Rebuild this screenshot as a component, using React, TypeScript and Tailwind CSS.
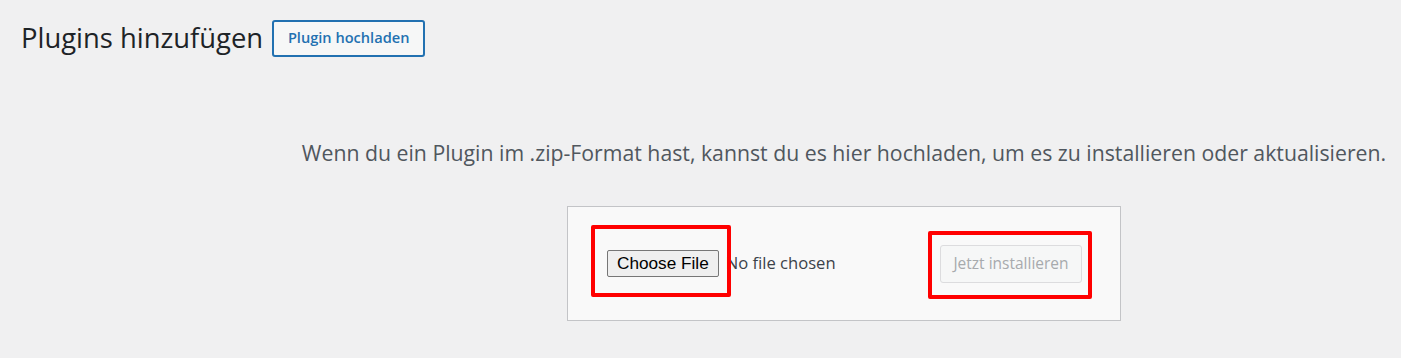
export default function App() {
  return (
    <main className="min-h-screen bg-[#f0f0f1] font-['Open_Sans',sans-serif] text-[#3c434a]">
      {/* Header */}
      <div className="flex items-center gap-[9px] pl-[21px] pt-[19px]">
        <h1 className="text-[27.4px] font-normal leading-[38px] text-[#1d2327]">Plugins hinzufügen</h1>
        <button className="h-[37px] w-[153px] rounded-[3px] border-2 border-[#2271b1] bg-[#f6f7f7] text-[14.6px] font-semibold text-[#2271b1]">
          Plugin hochladen
        </button>
      </div>

      {/* Upload area */}
      <div className="ml-[287px] flex w-[1114px] flex-col items-center">
        <p className="mt-[81px] whitespace-nowrap text-[21.25px] leading-[30px] text-[#50575e]">
          Wenn du ein Plugin im .zip-Format hast, kannst du es hier hochladen, um es zu installieren oder aktualisieren.
        </p>
        <form className="mt-[38px] flex h-[115px] w-[554px] items-center justify-between border border-[#c3c4c7] bg-[#f9f9f9] pl-[39px] pr-[38px]">
          <div className="relative flex items-center">
            <input
              type="file"
              className="w-[240px] font-['Open_Sans',sans-serif] text-[16.6px] text-[#3c434a] file:mr-[7px] file:h-[27px] file:rounded-[2px] file:border file:border-[#767676] file:bg-[#efefef] file:px-[9px] file:font-['Liberation_Sans',sans-serif] file:text-[17.2px] file:text-black"
            />
            <div className="pointer-events-none absolute left-[-16px] top-[-25px] h-[72px] w-[140px] rounded-[2px] border-4 border-[#ff0000]" />
          </div>
          <div className="relative">
            <button
              disabled
              className="h-[38px] w-[142px] rounded-[3px] border border-[#dcdcde] bg-[#f6f7f7] text-[15.5px] text-[#a7aaad]"
            >
              Jetzt installieren
            </button>
            <div className="pointer-events-none absolute left-[-12px] top-[-14px] h-[68px] w-[164px] rounded-[2px] border-4 border-[#ff0000]" />
          </div>
        </form>
      </div>
    </main>
  );
}
